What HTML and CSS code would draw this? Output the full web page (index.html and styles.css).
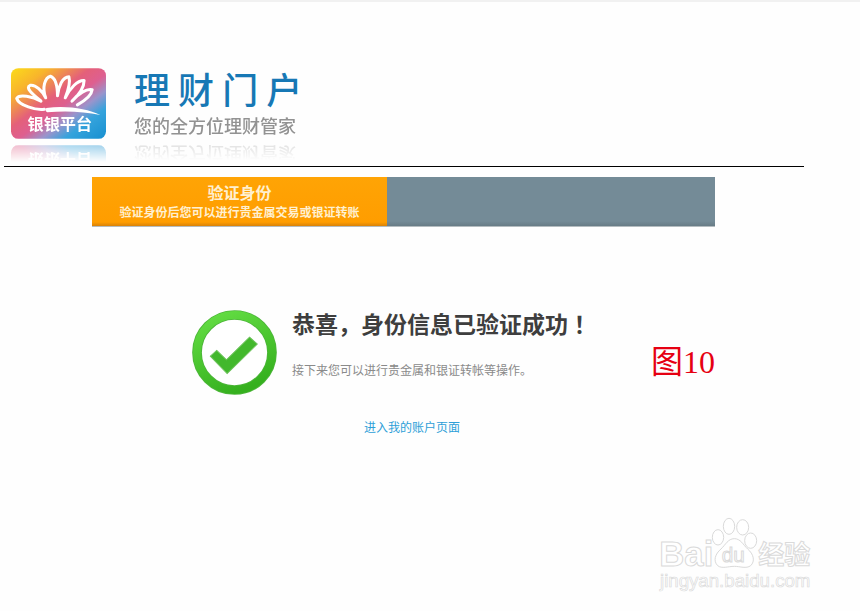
FILE: index.html
```html
<!DOCTYPE html>
<html lang="zh-CN">
<head>
  <meta charset="UTF-8">
  <title>理财门户</title>
  <meta name="viewport" content="width=device-width, initial-scale=1.0">
  <link rel="stylesheet" href="styles.css">
</head>
<body>
  <header class="header">
    <svg class="logo" viewBox="35 40 282 210" role="img" aria-label="银银平台">
      <defs>
        <linearGradient id="logo-bg" x1="0" y1="0" x2="1" y2="1">
          <stop offset="0" stop-color="#fbdc1a"/>
          <stop offset="0.2" stop-color="#f8b42c"/>
          <stop offset="0.42" stop-color="#e4607a"/>
          <stop offset="0.54" stop-color="#de5f90"/>
          <stop offset="0.66" stop-color="#9a94cc"/>
          <stop offset="0.78" stop-color="#35a3dc"/>
          <stop offset="1" stop-color="#168fd0"/>
        </linearGradient>
      </defs>
      <rect x="35" y="40" width="282" height="210" rx="22" fill="url(#logo-bg)"/>
      <!-- Lotus -->
      <path class="petals" d="M134 162C110 166 58 150 52 130C58 116 100 124 124 138C98 116 76 98 92 91C108 88 128 108 138 128C126 98 136 68 152 64C168 70 173 94 173 122C176 94 188 66 207 66C212 84 204 108 196 128C210 100 232 76 252 77C252 98 234 122 216 138C234 116 260 100 276 104C274 124 252 138 232 149"/>
      <path fill="#fff" d="M140 158C200 150 262 160 300 179C252 169 200 166 142 171Q134 164 140 158Z"/>
      <text class="logo-text" x="84" y="223">银银平台</text>
    </svg>
    <div class="brand">
      <h1>理 财 门 户</h1>
      <p class="slogan">您的全方位理财管家</p>
    </div>
  </header>

  <main class="panel">
    <div class="steps">
      <div class="step">
        <h2>验证身份</h2>
        <p>验证身份后您可以进行贵金属交易或银证转账</p>
      </div>
    </div>

    <section class="result">
      <svg class="tick" viewBox="36 32 254 254" aria-hidden="true">
        <defs>
          <linearGradient id="ring" x1="0.2" y1="0" x2="0.6" y2="1">
            <stop offset="0" stop-color="#62dc42"/>
            <stop offset="1" stop-color="#35b01e"/>
          </linearGradient>
        </defs>
        <circle cx="163" cy="159" r="112" fill="#fff" stroke="#4cb539" stroke-width="29"/>
        <circle cx="163" cy="159" r="112" fill="none" stroke="url(#ring)" stroke-width="24"/>
        <path d="M91 170L110 153L139 181L208 113L231 134L141 222Z" fill="#42b82c" stroke="#6cc25a" stroke-width="3"/>
      </svg>
      <div class="message">
        <h2>恭喜，身份信息已验证成功<span class="mark" lang="zh-TW">！</span></h2>
        <p>接下来您可以进行贵金属和银证转帐等操作。</p>
        <a href="#">进入我的账户页面</a>
      </div>
      <p class="figure">图10</p>
    </section>
  </main>

  <svg class="watermark" viewBox="54 33 468 231" role="img" aria-label="Baidu 经验">
    <text class="wm-name" x="58" y="184">Bai</text>
    <path d="M283 101C302 101 309 119 323 132C341 147 346 169 332 182C319 192 300 184 283 184C264 184 246 192 233 182C219 168 225 147 243 132C257 119 264 101 283 101Z"/>
    <ellipse cx="234" cy="97" rx="17" ry="23"/>
    <ellipse cx="267" cy="64" rx="17" ry="24"/>
    <ellipse cx="308" cy="67" rx="18" ry="23"/>
    <ellipse cx="332" cy="107" rx="18" ry="23"/>
    <text class="wm-du" x="245" y="172">du</text>
    <text class="wm-cn" x="355" y="178">经验</text>
    <text class="wm-url" x="60" y="247">jingyan.baidu.com</text>
  </svg>
</body>
</html>
```

FILE: styles.css
```css
* {
  box-sizing: border-box;
}

body {
  position: relative;
  min-height: 100vh;
  margin: 0;
  border-top: 2px solid #f1f1f1;
  background-color: #fefefe;
  font-family: "Noto Sans CJK SC", sans-serif;
}

h1, h2, p {
  margin: 0;
}

.header {
  display: flex;
  align-items: flex-start;
  gap: 28px;
  height: 165px;
  margin: 0 56px 0 4px;
  padding: 66px 0 0 7px;
  border-bottom: 1px solid #000;
}

.logo {
  width: 95px;
  height: 71px;
  -webkit-box-reflect: below 6px linear-gradient(transparent 76%, rgba(255, 255, 255, 0.4));
}

.petals {
  fill: none;
  stroke: #fff;
  stroke-width: 9;
  stroke-linejoin: round;
  stroke-linecap: round;
}

.logo-text {
  fill: #fff;
  font-family: "Noto Sans CJK SC", sans-serif;
  font-size: 48px;
  font-weight: bold;
}

.brand h1 {
  color: #1778b5;
  font-size: 36px;
  font-weight: 500;
  line-height: 40px;
}

.slogan {
  margin-top: 4px;
  color: #929292;
  font-size: 18px;
  font-weight: 500;
  line-height: 26px;
  -webkit-box-reflect: below 4px linear-gradient(transparent 30%, rgba(255, 255, 255, 0.3));
}

.panel {
  margin: 10px 145px 0 92px;
}

.steps {
  display: flex;
  background: linear-gradient(#748b97 90%, #687c86);
  border-bottom: 1px solid #b4bcc0;
}

.step {
  width: 295px;
  padding: 4px 0 6px;
  background: linear-gradient(#ffa405, #ff9d00 92%, #d98208);
  color: #fff0d0;
  text-align: center;
}

.step h2 {
  font-size: 16px;
  line-height: 22px;
}

.step p {
  font-size: 12px;
  font-weight: bold;
  line-height: 17px;
}

.result {
  display: flex;
  align-items: flex-start;
  padding: 83px 0 0 100px;
}

.tick {
  width: 85px;
  height: 85px;
  margin-right: 15px;
}

.message {
  flex: 1;
}

.message h2 {
  color: #3e3e3e;
  font-size: 23px;
  line-height: 26px;
  white-space: nowrap;
}

.mark {
  font-family: "Noto Sans CJK TC", sans-serif;
}

.message p {
  margin-top: 24px;
  color: #8a8a8a;
  font-size: 12px;
  line-height: 20px;
}

.message a {
  display: inline-block;
  margin: 37px 0 0 72px;
  color: #2d9fd8;
  font-size: 12px;
  line-height: 20px;
  text-decoration: none;
}

.figure {
  margin-top: 32px;
  color: #e60012;
  font-family: "Liberation Serif", "Noto Sans CJK SC", serif;
  font-size: 32px;
  line-height: 40px;
}

/* Watermark in the corner */
.watermark {
  position: absolute;
  right: 46px;
  bottom: 18px;
  width: 156px;
  height: 77px;
  fill: #fff;
  stroke: #dadada;
  stroke-width: 3;
}

.wm-name,
.wm-du,
.wm-url {
  font-family: "Liberation Sans", sans-serif;
}

.wm-name {
  font-size: 104px;
  font-weight: bold;
}

.wm-du {
  font-size: 62px;
}

.wm-cn {
  font-family: "Noto Sans CJK SC", sans-serif;
  font-size: 78px;
  font-weight: bold;
}

.wm-url {
  font-size: 56px;
  stroke-width: 2;
}
```
